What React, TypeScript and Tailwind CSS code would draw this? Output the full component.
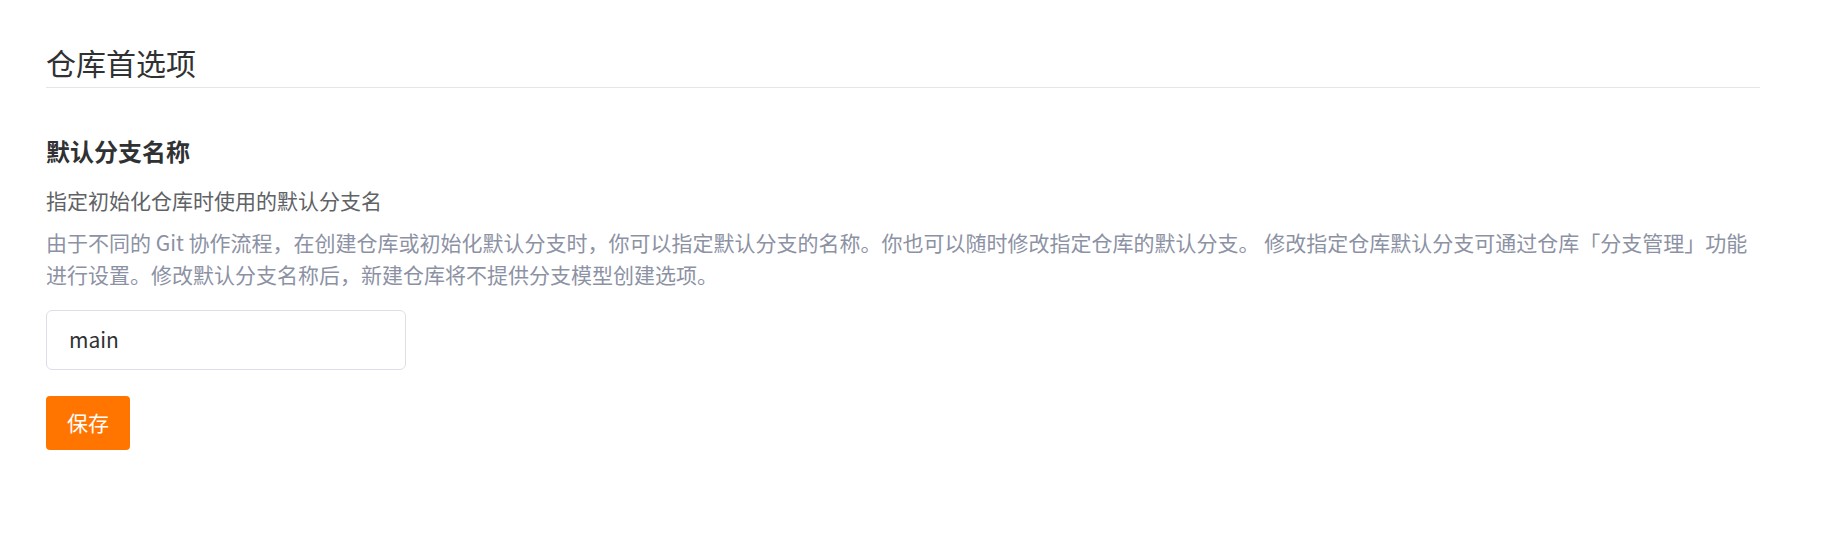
import React from "react";

export default function App() {
  return (
    <div
      className="min-h-[537px] w-full bg-white"
      style={{ fontFamily: '"Noto Sans CJK SC", "Noto Sans", sans-serif' }}
    >
      <div className="pl-[46px] pr-[84px] pt-[40px]">
        <div className="border-b border-[#e6e6e6] pb-[2px]">
          <h1 className="text-[30px] leading-[45px] font-normal text-[#303133]">仓库首选项</h1>
        </div>

        <section className="mt-[45px]">
          <h2 className="text-[24px] leading-[36px] font-bold text-[#303133]">默认分支名称</h2>
          <p className="mt-[15px] text-[21px] leading-[32px] text-[#606266]">指定初始化仓库时使用的默认分支名</p>
          <p className="mt-[10px] text-[21px] leading-[32px] text-[#8c92a4]">
            由于不同的 Git 协作流程，在创建仓库或初始化默认分支时，你可以指定默认分支的名称。你也可以随时修改指定仓库的默认分支。 修改指定仓库默认分支可通过仓库「分支管理」功能进行设置。修改默认分支名称后，新建仓库将不提供分支模型创建选项。
          </p>

          <div className="mt-[20px] flex h-[60px] w-[360px] items-center rounded-[6px] border border-[#dcdfe6] bg-white px-[22px]">
            <input
              className="w-full bg-transparent text-[21px] text-[#303133] outline-none"
              defaultValue="main"
            />
          </div>

          <button className="mt-[26px] flex h-[54px] w-[84px] items-center justify-center rounded-[4px] bg-[#ff7500] text-[21px] text-white">
            保存
          </button>
        </section>
      </div>
    </div>
  );
}
